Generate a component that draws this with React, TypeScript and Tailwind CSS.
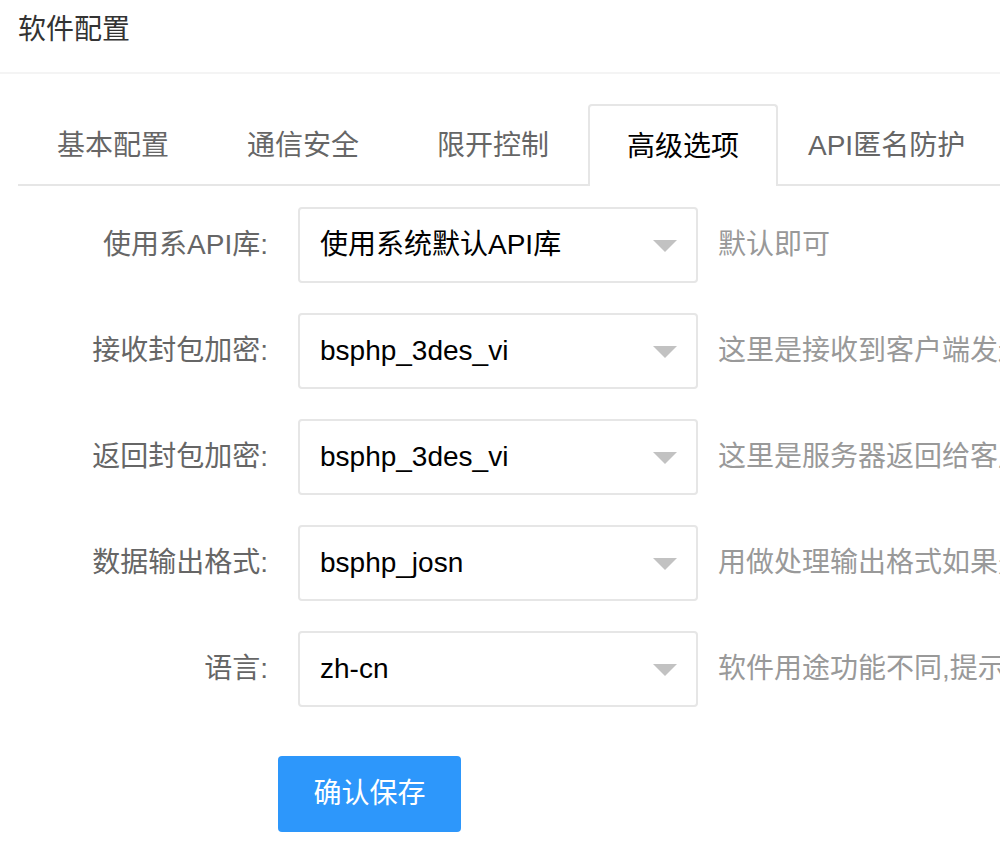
const tabs = ['基本配置', '通信安全', '限开控制', '高级选项', 'API匿名防护'];

const rows = [
  { label: '使用系API库:', value: '使用系统默认API库', hint: '默认即可' },
  { label: '接收封包加密:', value: 'bsphp_3des_vi', hint: '这里是接收到客户端发送的数据的加密方式' },
  { label: '返回封包加密:', value: 'bsphp_3des_vi', hint: '这里是服务器返回给客户端的数据的加密方式' },
  { label: '数据输出格式:', value: 'bsphp_josn', hint: '用做处理输出格式如果是特殊格式可以自定义' },
  { label: '语言:', value: 'zh-cn', hint: '软件用途功能不同,提示语言可以选择不同的语言包' },
];

function SelectBox({ value }: { value: string }) {
  return (
    <div className="relative flex h-[76px] w-[400px] shrink-0 items-center rounded-[4px] border-2 border-[#e6e6e6] bg-white pl-[20px] text-[28px] text-black">
      <span className="whitespace-nowrap">{value}</span>
      {/* select arrow */}
      <span className="absolute right-[19px] top-[31px] h-0 w-0 border-x-[12px] border-t-[12px] border-x-transparent border-t-[#c2c2c2]" />
    </div>
  );
}

export default function App() {
  const active = 3;

  return (
    <div
      className="min-h-screen w-[1000px] overflow-hidden bg-white"
      style={{ fontFamily: '"Liberation Sans", "Noto Sans CJK SC", sans-serif' }}
    >
      {/* Header */}
      <div className="h-[74px] border-b-2 border-[#f4f4f4] pl-[18px] pt-[10px] text-[28px] leading-[40px] text-[#333]">
        软件配置
      </div>

      {/* Tabs */}
      <div className="mt-[30px] pl-[18px]">
        <ul className="flex h-[82px] items-start border-b-2 border-[#e6e6e6]">
          {tabs.map((t, i) =>
            i === active ? (
              <li
                key={t}
                className="-mb-[2px] flex h-[82px] w-[190px] shrink-0 items-center justify-center rounded-t-[4px] border-x-2 border-t-2 border-[#e6e6e6] bg-white pt-[2px] text-[28px] text-black"
              >
                {t}
              </li>
            ) : i === tabs.length - 1 ? (
              <li
                key={t}
                className="flex h-[80px] shrink-0 items-center whitespace-nowrap px-[30px] pt-[3px] text-[28px] text-[#666]"
              >
                {t}
              </li>
            ) : (
              <li
                key={t}
                className="flex h-[80px] w-[190px] shrink-0 items-center justify-center whitespace-nowrap pt-[3px] text-[28px] text-[#666]"
              >
                {t}
              </li>
            )
          )}
        </ul>
      </div>

      {/* Form */}
      <div className="mt-[21px] flex flex-col gap-[30px]">
        {rows.map((r) => (
          <div key={r.label} className="flex items-center">
            <label className="w-[298px] shrink-0 whitespace-nowrap pr-[30px] text-right text-[28px] text-[#666]">
              {r.label}
            </label>
            <SelectBox value={r.value} />
            <span className="ml-[20px] whitespace-nowrap text-[28px] text-[#999]">{r.hint}</span>
          </div>
        ))}
      </div>

      <div className="mt-[49px] pl-[278px]">
        <button className="h-[76px] w-[183px] rounded-[4px] bg-[#2d97fb] text-[28px] text-white">
          确认保存
        </button>
      </div>
    </div>
  );
}
